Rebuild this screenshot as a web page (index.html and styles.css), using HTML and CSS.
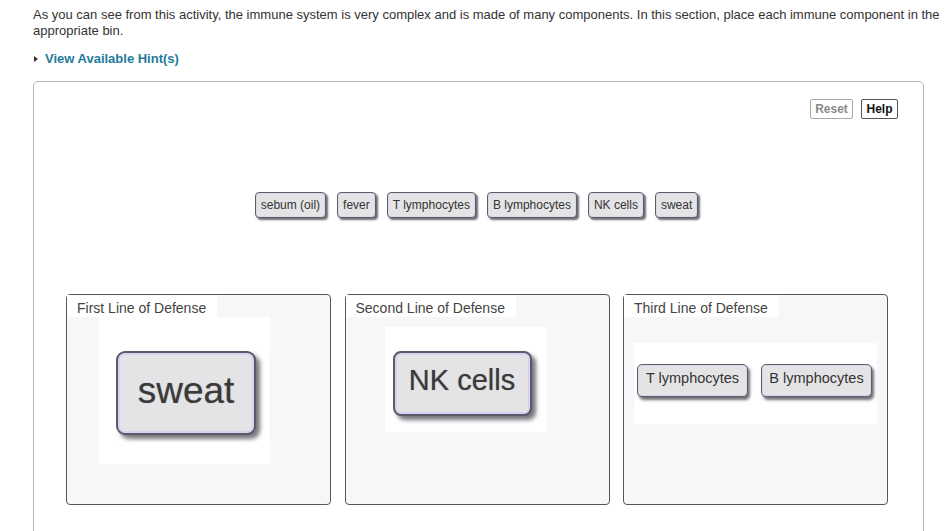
FILE: index.html
```html
<!DOCTYPE html>
<html>
<head>
<meta charset="utf-8">
<link rel="stylesheet" href="styles.css">
</head>
<body>
<div class="page">
  <p class="intro">As you can see from this activity, the immune system is very complex and is made of many components. In this section, place each immune component in the appropriate bin.</p>
  <div class="hint"><span class="tri"></span>View Available Hint(s)</div>
  <div class="activity">
    <div class="toolbar">
      <button class="btn reset">Reset</button>
      <button class="btn help">Help</button>
    </div>
    <div class="pool">
      <span class="chip">sebum (oil)</span>
      <span class="chip">fever</span>
      <span class="chip">T lymphocytes</span>
      <span class="chip">B lymphocytes</span>
      <span class="chip">NK cells</span>
      <span class="chip">sweat</span>
    </div>
    <div class="bins">
      <div class="bin">
        <div class="label">First Line of Defense</div>
        <div class="pic pic1"><span class="chip big1">sweat</span></div>
      </div>
      <div class="bin">
        <div class="label">Second Line of Defense</div>
        <div class="pic pic2"><span class="chip big2">NK cells</span></div>
      </div>
      <div class="bin">
        <div class="label">Third Line of Defense</div>
        <div class="pic pic3"><span class="chip mid">T lymphocytes</span><span class="chip mid">B lymphocytes</span></div>
      </div>
    </div>
  </div>
</div>
</body>
</html>
```

FILE: styles.css
```css
html, body {
  margin: 0;
  padding: 0;
  background: #fff;
}
body {
  font-family: "Liberation Sans", Arial, sans-serif;
  color: #333;
  overflow: hidden;
}
.page {
  padding: 0 4px 0 33px;
}
.intro {
  margin: 7px 0 0 0;
  font-size: 13px;
  line-height: 16px;
  color: #333;
}
.hint {
  margin-top: 12px;
  height: 16px;
  line-height: 16px;
  font-size: 13px;
  font-weight: bold;
  color: #1f7b9b;
  display: flex;
  align-items: center;
}
.tri {
  width: 0;
  height: 0;
  border-top: 3.5px solid transparent;
  border-bottom: 3.5px solid transparent;
  border-left: 4px solid #333;
  margin: 0 7px 0 1px;
}
.activity {
  margin-top: 14px;
  height: 470px;
  border: 1px solid #b8b8b8;
  border-radius: 5px;
  box-sizing: border-box;
  width: 891px;
  padding-top: 17px;
}
.toolbar {
  display: flex;
  justify-content: flex-end;
  gap: 8px;
  padding-right: 25px;
  height: 20px;
}
.btn {
  font-family: "Liberation Sans", Arial, sans-serif;
  font-size: 12px;
  font-weight: bold;
  background: #fff;
  border-radius: 2px;
  padding: 0 4px;
  height: 20px;
  line-height: 18px;
  margin: 0;
}
.reset {
  color: #8a8a8a;
  border: 1px solid #a8a8a8;
  width: 43px;
}
.help {
  color: #111;
  border: 1px solid #555;
  width: 37px;
}
.pool {
  margin-top: 73px;
  display: flex;
  justify-content: center;
  gap: 11px;
  padding-right: 4px;
}
.chip {
  display: inline-flex;
  align-items: center;
  justify-content: center;
  box-sizing: border-box;
  height: 26px;
  padding: 0 5px;
  font-size: 12px;
  color: #333;
  background: #e4e4e6;
  border: 1px solid #5e5e66;
  border-radius: 4px;
  box-shadow: inset 0 0 0 1px #d9d6ee, 2px 2px 2px rgba(60,60,70,0.75);
  white-space: nowrap;
}
.bins {
  margin-top: 76px;
  margin-left: 32px;
  display: flex;
  gap: 13.5px;
}
.bin {
  width: 265px;
  height: 211px;
  box-sizing: border-box;
  background: #f7f7f9;
  border: 1px solid #55555c;
  border-radius: 4px;
  display: flex;
  flex-direction: column;
  align-items: flex-start;
}
.label {
  background: #fff;
  font-size: 14px;
  color: #444;
  height: 22px;
  line-height: 26px;
  padding: 0 11px 0 10px;
}
.pic {
  background: #fff;
  box-sizing: border-box;
  display: flex;
}
.pic1 {
  margin-left: 32px;
  width: 171px;
  height: 147px;
  padding: 34px 0 0 17px;
}
.pic2 {
  margin: 10px 0 0 39px;
  width: 161px;
  height: 105px;
  padding: 24px 0 0 8px;
}
.pic3 {
  margin: 26px 0 0 10px;
  width: 243px;
  height: 81px;
  padding: 21px 0 0 3px;
  gap: 13px;
}
.big1 {
  width: 140px;
  height: 84px;
  font-size: 37px;
  color: #3a3a3a;
  border: 2px solid #5a5a68;
  border-radius: 9px;
  box-shadow: inset 0 0 0 2px #d6d2f2, 4px 4px 4px rgba(60,60,70,0.7);
  padding: 0 0 4px 0;
  text-shadow: 0 0 1px rgba(0,0,0,0.4);
}
.big2 {
  width: 139px;
  height: 65px;
  font-size: 29px;
  color: #3a3a3a;
  border: 2px solid #5a5a68;
  border-radius: 8px;
  box-shadow: inset 0 0 0 2px #d6d2f2, 4px 4px 4px rgba(60,60,70,0.7);
  padding: 0 0 6px 0;
  text-shadow: 0 0 1px rgba(0,0,0,0.4);
}
.mid {
  width: 111px;
  height: 33px;
  font-size: 14.5px;
  border-radius: 5px;
  padding: 0 0 6px 0;
  box-shadow: inset 0 0 0 1px #d9d6ee, 2px 3px 3px rgba(60,60,70,0.75);
}
```
